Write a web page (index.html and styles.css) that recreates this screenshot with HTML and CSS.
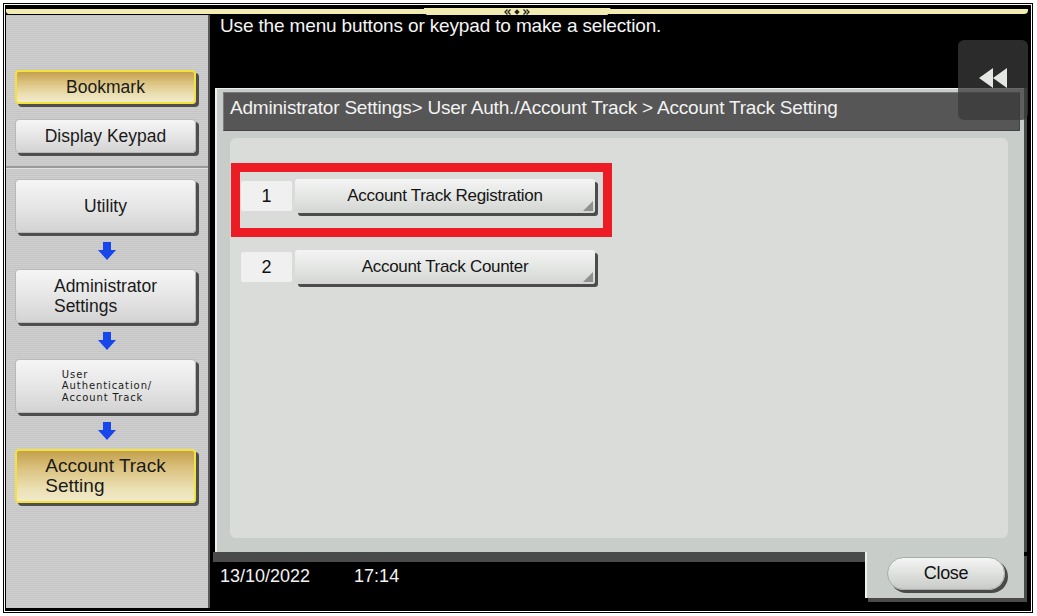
FILE: index.html
```html
<!DOCTYPE html>
<html lang="en">
<head>
    <meta charset="UTF-8">
    <title>Account Track Setting</title>
    <link rel="stylesheet" href="styles.css">
</head>
<body>
    <div class="frame">
        <div class="screen">
            <div class="topbar">
                <div class="strip">
                    <div class="strip-tab">
                        <svg width="28" height="6" viewBox="0 0 28 6">
                            <path d="M4.5 0.5L2 3l2.5 2.5M7.5 0.5L5 3l2.5 2.5M20.5 0.5L23 3l-2.5 2.5M23.5 0.5L26 3l-2.5 2.5" fill="none" stroke="#222" stroke-width="1.3"/>
                            <path d="M14 0.3L16.7 3 14 5.7 11.3 3z" fill="#222"/>
                        </svg>
                    </div>
                </div>
            </div>

            <div class="main-row">
                <aside class="sidebar">
                    <div class="side-group">
                        <div class="side-btn side-btn-yellow">Bookmark</div>
                        <div class="side-btn">Display Keypad</div>
                    </div>
                    <div class="side-nav">
                        <div class="side-btn side-btn-tall">Utility</div>
                        <svg class="down-arrow" width="18" height="18" viewBox="0 0 18 18"><path d="M5 0h8v8h5l-9 10-9-10h5z"/></svg>
                        <div class="side-btn side-btn-tall"><span>Administrator<br>Settings</span></div>
                        <svg class="down-arrow" width="18" height="18" viewBox="0 0 18 18"><path d="M5 0h8v8h5l-9 10-9-10h5z"/></svg>
                        <div class="side-btn side-btn-tall side-btn-small"><span>User<br>Authentication/<br>Account Track</span></div>
                        <svg class="down-arrow" width="18" height="18" viewBox="0 0 18 18"><path d="M5 0h8v8h5l-9 10-9-10h5z"/></svg>
                        <div class="side-btn side-btn-tall side-btn-yellow side-btn-big"><span>Account Track<br>Setting</span></div>
                    </div>
                </aside>

                <main class="main">
                    <p class="message">Use the menu buttons or keypad to make a selection.</p>

                    <div class="back-btn">
                        <svg width="28" height="20" viewBox="0 0 28 20"><path d="M0 10L14 0v20zM14 10L28 0v20z" fill="#e3e6e3"/></svg>
                    </div>

                    <section class="panel">
                        <div class="crumbs">Administrator Settings&gt; User Auth./Account Track &gt; Account Track Setting</div>
                        <div class="menu">
                            <div class="highlight">
                                <div class="item">
                                    <div class="num">1</div>
                                    <div class="item-btn">Account Track Registration</div>
                                </div>
                            </div>
                            <div class="item item-second">
                                <div class="num">2</div>
                                <div class="item-btn">Account Track Counter</div>
                            </div>
                        </div>
                    </section>

                    <div class="footer">
                        <div class="clock">
                            <span>13/10/2022</span>
                            <span>17:14</span>
                        </div>
                        <div class="close-tab">
                            <div class="close-btn">Close</div>
                        </div>
                    </div>
                </main>
            </div>
        </div>
    </div>
</body>
</html>
```

FILE: styles.css
```css
body {
    margin: 0;
    background-color: #fff;
    font-family: "Liberation Sans", Arial, sans-serif;
}

.frame {
    width: fit-content;
    margin: 3px;
    border: 1px solid #000;
    padding: 1px;
    background-color: #fff;
}

.screen {
    width: 1026px;
    height: 606px;
    background-color: #000;
    display: flex;
    flex-direction: column;
}

/* barra amarela do topo */
.topbar {
    height: 10px;
    box-sizing: border-box;
    padding: 4px 3px 0 1px;
}

.strip {
    height: 5px;
    background-color: #f2ecb2;
    border-radius: 0 0 4px 3px;
    display: flex;
    justify-content: center;
}

.strip-tab {
    width: 187px;
    height: 7px;
    margin-top: -1px;
    background-color: #f2ecb2;
    clip-path: polygon(0 0, 100% 0, calc(100% - 3px) 100%, 3px 100%);
    display: flex;
    justify-content: center;
    padding-top: 1px;
    box-sizing: border-box;
}

.main-row {
    flex: 1;
    display: flex;
    min-height: 0;
}

/* menu lateral */
.sidebar {
    width: 202px;
    margin: 0 0 3px 1px;
    border-right: 2px solid #5a5a5a;
    background: repeating-linear-gradient(to bottom, #c5c5c5 0 1px, #cfcfcf 1px 2px);
}

.side-group {
    padding: 55px 0 13px 9px;
    border-bottom: 2px solid #9a9a9a;
    box-shadow: 0 1px 0 #e2e2e2;
}

.side-nav {
    padding: 11px 0 0 9px;
}

.side-btn {
    width: 181px;
    height: 34px;
    box-sizing: border-box;
    border: 1px solid #b9b9b9;
    border-radius: 4px;
    background: linear-gradient(#f5f5f5, #e6e6e6 50%, #d3d3d3);
    box-shadow: 3px 3px 0 #4e4e4e;
    display: flex;
    align-items: center;
    justify-content: center;
    font-size: 17.5px;
    color: #1a1a1a;
}

.side-btn + .side-btn {
    margin-top: 15px;
}

.side-btn span {
    text-align: left;
    line-height: 20px;
}

.side-btn-tall {
    height: 54px;
}

.side-btn-yellow {
    border: 2px solid #f4e23c;
    background: linear-gradient(#c3a04c, #dbc27f 35%, #ebe0b3 75%, #f1eacb);
}

.side-btn-small span {
    font-family: "DejaVu Sans", sans-serif;
    font-size: 10px;
    line-height: 11.5px;
    letter-spacing: 0.9px;
    padding-left: 3px;
}

.side-btn-big {
    font-size: 19px;
}

.down-arrow {
    display: block;
    margin: 9px 0 9px 83px;
    fill: #1747ea;
}

/* area principal */
.main {
    flex: 1;
    display: flex;
    flex-direction: column;
    position: relative;
}

.message {
    margin: 0;
    height: 73px;
    padding-left: 10px;
    color: #f4f4f4;
    font-size: 19px;
    line-height: 22px;
    letter-spacing: -0.15px;
}

.back-btn {
    position: absolute;
    left: 748px;
    top: 25px;
    width: 70px;
    height: 80px;
    box-sizing: border-box;
    padding-bottom: 4px;
    border-radius: 6px;
    background-color: rgba(58, 58, 58, 0.75);
    display: flex;
    align-items: center;
    justify-content: center;
    z-index: 2;
}

.panel {
    width: 809px;
    height: 464px;
    box-sizing: border-box;
    margin-left: 5px;
    padding: 3px 4px 0 6px;
    background-color: #c9cdc9;
    border-top: 1px solid #eef0ee;
    border-left: 2px solid #eef0ee;
    box-shadow: 3px 0 0 #4a4a4a;
}

.crumbs {
    height: 39px;
    box-sizing: border-box;
    padding: 4px 0 0 6px;
    background-color: #565656;
    border: 1px solid #7a7a7a;
    border-right-color: #444;
    border-bottom-color: #444;
    color: #f2f2f2;
    font-size: 19px;
    line-height: 22px;
    letter-spacing: -0.2px;
    white-space: nowrap;
}

.menu {
    height: 400px;
    box-sizing: border-box;
    margin: 7px 12px 0 7px;
    padding: 25px 0 0 1px;
    background-color: #d9dcd9;
    border-radius: 6px;
}

.highlight {
    width: 381px;
    height: 74px;
    box-sizing: border-box;
    border: 9px solid #ed1c24;
    padding: 7px 0 0 1px;
}

.item {
    display: flex;
    align-items: center;
    gap: 3px;
}

.item-second {
    margin: 13px 0 0 10px;
}

.num {
    width: 51px;
    height: 30px;
    background-color: #eff0ef;
    border-radius: 2px;
    display: flex;
    align-items: center;
    justify-content: center;
    font-size: 18px;
    color: #111;
}

.item-btn {
    position: relative;
    width: 300px;
    height: 34px;
    box-sizing: border-box;
    border-radius: 3px;
    background: linear-gradient(#f3f4f3, #e3e5e3 55%, #d3d5d3);
    box-shadow: 3px 3px 0 #4c4c4c;
    display: flex;
    align-items: center;
    justify-content: center;
    font-size: 17px;
    letter-spacing: -0.3px;
    color: #151515;
}

.item-btn::after {
    content: "";
    position: absolute;
    right: 2px;
    bottom: 2px;
    width: 10px;
    height: 10px;
    background-color: #8f918f;
    clip-path: polygon(100% 0, 100% 100%, 0 100%);
}

/* rodape */
.footer {
    flex: 1;
    display: flex;
    padding-right: 7px;
}

.clock {
    flex: 1;
    display: flex;
    gap: 44px;
    margin-left: 3px;
    padding: 3px 0 0 7px;
    border-top: 10px solid #4a4a4a;
    color: #f2f2f2;
    font-size: 18px;
    line-height: 22px;
}

.close-tab {
    width: 159px;
    height: 46px;
    box-sizing: border-box;
    padding: 5px 0 0 20px;
    background-color: #c9cdc9;
    border-left: 2px solid #eef0ee;
    box-shadow: 3px 4px 0 #4a4a4a;
}

.close-btn {
    width: 118px;
    height: 33px;
    box-sizing: border-box;
    border: 1px solid #a9aba9;
    border-radius: 17px;
    background: linear-gradient(#f4f5f4, #dfe1df 50%, #c9cbc9);
    box-shadow: 3px 3px 0 #4a4a4a;
    display: flex;
    align-items: center;
    justify-content: center;
    font-size: 18px;
    letter-spacing: -0.3px;
    color: #111;
}
```
